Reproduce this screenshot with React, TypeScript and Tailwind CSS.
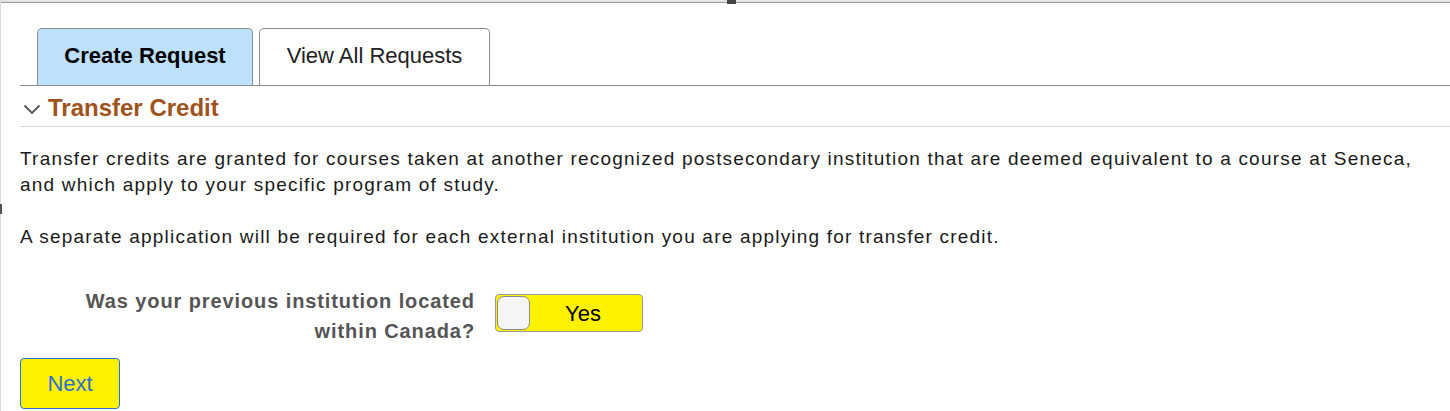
import React from "react";

export default function App() {
  return (
    <div
      className="relative w-[1450px] h-[411px] bg-white overflow-hidden text-[#1a1a1a]"
      style={{ fontFamily: '"Liberation Sans", Arial, sans-serif' }}
    >
      <div className="h-[3px] bg-[#e4e4e4] border-b border-[#9a9a9a]" />
      <div className="absolute left-[727px] top-0 w-[9px] h-[4px] bg-[#444]" />
      <div className="absolute left-0 top-0 w-px h-full bg-[#dcdcdc]" />
      <div className="absolute left-0 top-[204px] w-[2px] h-[10px] bg-[#555]" />

      <div className="pl-[20px]">
        <div className="flex gap-[6px] pl-[17px] pt-[25px] border-b border-[#8a8f96]">
          <div className="w-[216px] h-[57px] flex items-center justify-center pb-[4px] bg-[#bde0fb] border border-b-0 border-[#8a8f96] rounded-t-[5px] text-[22px] font-bold text-black">
            Create Request
          </div>
          <div className="w-[231px] h-[57px] flex items-center justify-center pb-[4px] bg-white border border-b-0 border-[#8a8f96] rounded-t-[5px] text-[22px] text-[#222]">
            View All Requests
          </div>
        </div>

        <div className="flex items-center h-[41px] pt-[4px] border-b border-[#d6d6d6]">
          <svg width="18" height="12" viewBox="0 0 18 12" className="ml-[3px] mr-[7px] mt-[2px]">
            <path d="M1.5 2.5 L9 10 L16.5 2.5" fill="none" stroke="#555" strokeWidth="1.8" />
          </svg>
          <span className="text-[24px] font-bold text-[#a0521c]">Transfer Credit</span>
        </div>

        <div className="pt-[19px] text-[19px] leading-[26px] tracking-[1.2px] text-[#1a1a1a] pr-[10px]">
          <p>
            Transfer credits are granted for courses taken at another recognized postsecondary institution that are deemed equivalent to a course at Seneca, and which apply to your specific program of study.
          </p>
          <p className="mt-[26px]">
            A separate application will be required for each external institution you are applying for transfer credit.
          </p>
        </div>

        <div className="flex items-start mt-[36px]">
          <div className="w-[455px] text-right text-[20px] leading-[30px] tracking-[0.9px] font-bold text-[#555]">
            Was your previous institution located
            <br />
            within Canada?
          </div>
          <div className="ml-[20px] mt-[8px] w-[148px] h-[38px] bg-[#fff200] border border-[#9a9a9a] rounded-[4px] flex items-center pl-[1px]">
            <div className="w-[33px] h-[34px] bg-[#f5f5f5] border border-[#8a8a8a] rounded-[7px]" />
            <span className="flex-1 text-center text-[22px] text-black pr-[6px]">Yes</span>
          </div>
        </div>

        <div className="mt-[12px]">
          <div className="w-[100px] h-[51px] bg-[#fff200] border border-[#2a6fd6] rounded-[4px] flex items-center justify-center text-[22px] text-[#2a6fd6]">
            Next
          </div>
        </div>
      </div>
    </div>
  );
}
